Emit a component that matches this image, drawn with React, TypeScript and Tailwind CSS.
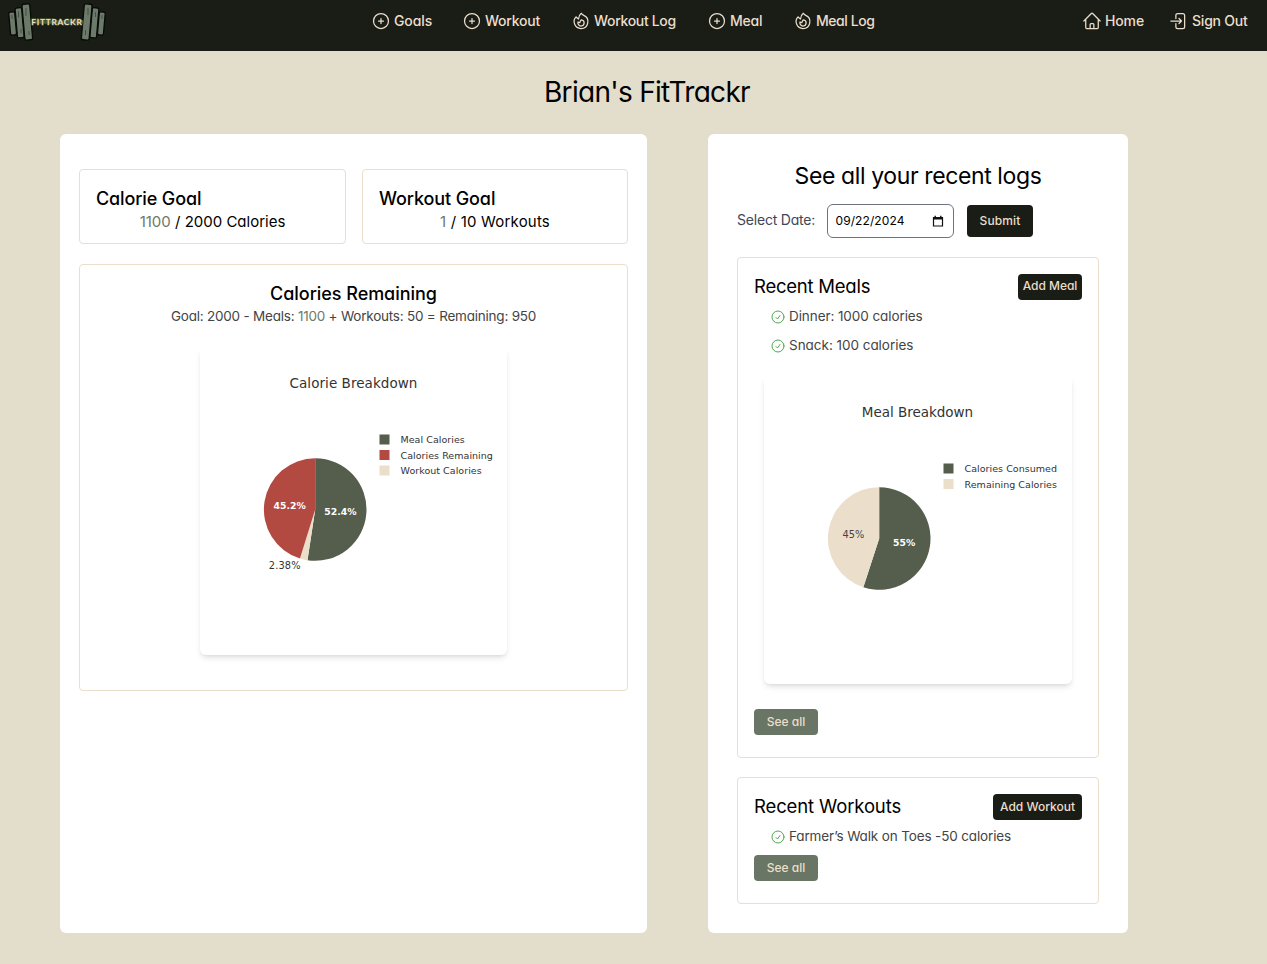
import React from 'react';
import { HiOutlineFire, HiOutlineHome } from 'react-icons/hi2';

function PlusCircle() {
  return (
    <svg viewBox="0 0 24 24" fill="none" stroke="currentColor" strokeWidth="1.5" strokeLinecap="round" className="size-[20px] shrink-0">
      <circle cx="12" cy="12" r="9" />
      <path d="M12 9v6M9 12h6" />
    </svg>
  );
}

function CheckCircle() {
  return (
    <svg viewBox="0 0 24 24" fill="none" stroke="#4fa852" strokeWidth="1.5" strokeLinecap="round" strokeLinejoin="round" className="size-[16px] shrink-0">
      <circle cx="12" cy="12" r="9" />
      <path d="M9 12.75 11.25 15 15 9.75" />
    </svg>
  );
}

function SignOut() {
  return (
    <svg viewBox="0 0 24 24" fill="none" stroke="currentColor" strokeWidth="1.5" strokeLinecap="round" strokeLinejoin="round" className="size-[20px] shrink-0">
      <path d="M8.25 9V5.25A2.25 2.25 0 0 1 10.5 3h6a2.25 2.25 0 0 1 2.25 2.25v13.5A2.25 2.25 0 0 1 16.5 21h-6a2.25 2.25 0 0 1-2.25-2.25V15M12 9l3 3m0 0-3 3m3-3H2.25" />
    </svg>
  );
}

function Fire() {
  return <HiOutlineFire className="size-[20px] shrink-0" />;
}

function Logo() {
  return (
    <svg viewBox="0 0 98 40" className="h-[40px] w-[98px] shrink-0">
      <g fill="#6c7a69" stroke="#080a07" strokeWidth="1.3">
        <rect x="1.6" y="10" width="6" height="23" rx="1.6" transform="rotate(-5 4.6 21)" />
        <rect x="8.3" y="5.8" width="6.6" height="30" rx="1.6" transform="rotate(-5 11.6 21)" />
        <rect x="15.4" y="2" width="7.8" height="36" rx="1.8" transform="rotate(-5 19.3 20)" />
        <rect x="90.4" y="10" width="6" height="23" rx="1.6" transform="rotate(5 93.4 21)" />
        <rect x="83.1" y="5.8" width="6.6" height="30" rx="1.6" transform="rotate(5 86.4 21)" />
        <rect x="74.8" y="2" width="7.8" height="36" rx="1.8" transform="rotate(5 78.7 20)" />
      </g>
      <g stroke="#080a07" strokeWidth="0.7" fill="none" opacity="0.55">
        <path d="M4 13v4M10.500 9.500v6M18 6v8M13 27v4M21 29v4M80 6v7M87.500 10v5M94 13v4M77.500 28v5" />
      </g>
      <path d="M24 20h51" stroke="#4d5937" strokeWidth="3.500" />
      <text x="23.3" y="22.800" fill="#ebdecb" stroke="#5f6d36" strokeWidth="0.8" paintOrder="stroke" className="font-['Lato'] text-[8.300px] font-bold tracking-[0.75px]">FITTRACKR</text>
    </svg>
  );
}

function arc(cx: number, cy: number, r: number, from: number, to: number) {
  const p = (t: number) => [cx + r * Math.sin(2 * Math.PI * t), cy - r * Math.cos(2 * Math.PI * t)];
  const [x0, y0] = p(from);
  const [x1, y1] = p(to);
  return `M${cx} ${cy}L${x0} ${y0}A${r} ${r} 0 ${to - from > 0.5 ? 1 : 0} 1 ${x1} ${y1}Z`;
}

type Slice = { from: number; to: number; color: string; label: string; x: number; y: number; labelClass: string };
type Legend = { color: string; text: string };

function PieChart({ title, titleClass, slices, legend }: { title: string; titleClass: string; slices: Slice[]; legend: Legend[] }) {
  return (
    <svg viewBox="0 0 308 308" className="block h-[308px] w-[308px] font-['DejaVu_Sans']">
      <text x="153.5" y="41" textAnchor="middle" className={titleClass}>{title}</text>
      {slices.map((s) => (
        <path key={s.label} d={arc(115.2, 162.5, 51.3, s.from, s.to)} fill={s.color} />
      ))}
      {slices.map((s) => (
        <text key={s.label} x={s.x} y={s.y} textAnchor="middle" className={s.labelClass}>{s.label}</text>
      ))}
      {legend.map((l, i) => (
        <g key={l.text}>
          <rect x="179.5" y={87.5 + i * 15.5} width="10" height="10" fill={l.color} />
          <text x="200.5" y={96 + i * 15.5} className="fill-[#333] text-[9.5px] tracking-[0.04px]">{l.text}</text>
        </g>
      ))}
    </svg>
  );
}

const GREEN = '#555d4d';
const RED = '#b34a41';
const CREAM = '#ebdecb';

function NavItem({ icon, label, labelClass }: { icon: React.ReactNode; label: string; labelClass: string }) {
  return (
    <a className="flex items-center gap-[3px]">
      {icon}
      <span className={labelClass}>{label}</span>
    </a>
  );
}

function Item({ children, textClass }: { children: React.ReactNode; textClass: string }) {
  return (
    <li className="flex h-[29px] items-center gap-[3px] pl-[16px]">
      <CheckCircle />
      <span className={textClass}>{children}</span>
    </li>
  );
}

function SeeAll() {
  return (
    <button className="flex h-[26px] w-[64px] items-center justify-center rounded bg-[#6a7665] pb-px text-[12px] font-medium text-[#ebdecb]">See all</button>
  );
}

export default function App() {
  return (
    <div className="h-[964px] w-[1267px] overflow-hidden bg-[#e3decc] font-['Inter',sans-serif] whitespace-nowrap text-black [font-feature-settings:'cv11']">
      <nav className="flex h-[51px] items-start bg-[#1a1c16] text-[14px] leading-[21px] font-medium text-[#ebdecb]">
        <div className="w-[371px] pt-[2px] pl-[8px]"><Logo /></div>
        <div className="flex flex-1 pt-[10px]">
          <NavItem icon={<PlusCircle />} label="Goals" labelClass="w-[68px] tracking-[-0.1px]" />
          <NavItem icon={<PlusCircle />} label="Workout" labelClass="w-[86px] tracking-[-0.22px]" />
          <NavItem icon={<Fire />} label="Workout Log" labelClass="w-[113px] tracking-[-0.32px]" />
          <NavItem icon={<PlusCircle />} label="Meal" labelClass="w-[63px] tracking-[-0.25px]" />
          <NavItem icon={<Fire />} label="Meal Log" labelClass="tracking-[-0.45px]" />
        </div>
        <div className="flex w-[185px] pt-[10px]">
          <NavItem icon={<HiOutlineHome className="size-[20px] shrink-0" />} label="Home" labelClass="w-[64px] tracking-[-0.13px]" />
          <NavItem icon={<SignOut />} label="Sign Out" labelClass="tracking-[-0.22px]" />
        </div>
      </nav>

      <h1 className="flex h-[83px] items-center pb-[2px] pl-[544px] text-[28px] tracking-[-0.71px]">Brian's FitTrackr</h1>

      <main className="flex gap-[61px] pl-[60px]">
        <section className="h-[799px] w-[587px] rounded-md bg-white px-[19px] pt-[35px]">
          <div className="flex gap-[16px]">
            <div className="h-[75px] w-[267px] rounded border border-[#ebdecb] px-[16px] pt-[17px]">
              <h2 className="text-[18px] leading-[23px] font-medium tracking-[-0.12px]">Calorie Goal</h2>
              <p className="text-center text-[15px] leading-[24px]"><span className="text-[#6c7a69]">1100</span> / 2000 Calories</p>
            </div>
            <div className="h-[75px] w-[266px] rounded border border-[#ebdecb] px-[16px] pt-[17px]">
              <h2 className="text-[18px] leading-[23px] font-medium tracking-[-0.1px]">Workout Goal</h2>
              <p className="text-center text-[15px] leading-[24px] tracking-[0.19px]"><span className="text-[#6c7a69]">1</span> / 10 Workouts</p>
            </div>
          </div>
          <div className="mt-[20px] flex h-[427px] flex-col items-center rounded border border-[#ebdecb] pt-[17px]">
            <h2 className="text-[18px] leading-[23px] font-medium tracking-[-0.04px]">Calories Remaining</h2>
            <p className="text-[13.5px] leading-[23px] tracking-[-0.22px] text-[#444]">Goal: 2000 - Meals: <span className="text-[#6c7a69]">1100</span> + Workouts: 50 = Remaining: 950</p>
            <div className="mt-[19px] -ml-px w-[307px] overflow-visible rounded-md bg-white shadow-md">
              <PieChart
                title="Calorie Breakdown"
                titleClass="fill-[#333] text-[13.5px] tracking-[0.06px]"
                slices={[
                  { from: 0, to: 0.524, color: GREEN, label: '52.4%', x: 140.5, y: 168, labelClass: 'fill-white text-[9.3px] font-bold' },
                  { from: 0.524, to: 0.548, color: CREAM, label: '2.38%', x: 84.7, y: 222, labelClass: 'fill-[#333] text-[9.8px] tracking-[0.15px]' },
                  { from: 0.548, to: 1, color: RED, label: '45.2%', x: 89.7, y: 162, labelClass: 'fill-white text-[9.3px] font-bold' },
                ]}
                legend={[
                  { color: GREEN, text: 'Meal Calories' },
                  { color: RED, text: 'Calories Remaining' },
                  { color: CREAM, text: 'Workout Calories' },
                ]}
              />
            </div>
          </div>
        </section>

        <section className="h-[799px] w-[420px] rounded-md bg-white px-[29px] pt-[27px]">
          <h2 className="text-center text-[23px] leading-[30px] tracking-[-0.39px]">See all your recent logs</h2>
          <div className="mt-[13px] flex h-[34px] items-center">
            <label className="w-[90px] pb-[3px] text-[14px] tracking-[-0.2px] text-[#404858]">Select Date:</label>
            <div className="flex h-[34px] w-[127px] items-center justify-between rounded-md border border-[#6b7280] pr-[9px] pl-[7.5px] text-[12px] tracking-[0.09px]">
              <span>09/22/2024</span>
              <svg viewBox="0 0 12 13" className="h-[13px] w-[12px]">
                <path d="M1.5 2.5h9v8.5h-9z" fill="none" stroke="#111" strokeWidth="1.2" />
                <path d="M1 2h10v2.5H1zM2.5 .8h1.4V2H2.5zM8.1 .8h1.4V2H8.1z" fill="#111" />
              </svg>
            </div>
            <button className="ml-[13px] flex h-[32px] w-[66px] items-center justify-center rounded bg-[#1a1c16] text-[12px] font-medium tracking-[0.14px] text-[#ebdecb]">Submit</button>
          </div>

          <div className="mt-[19px] h-[501px] w-[362px] rounded border border-[#ebdecb] px-[16px] pt-[16px]">
            <div className="flex h-[28px] items-start justify-between">
              <h3 className="text-[18.5px] leading-[24px] tracking-[-0.24px]">Recent Meals</h3>
              <button className="flex h-[26px] w-[64px] items-center justify-center rounded bg-[#1a1c16] pb-[2px] text-[12px] font-medium tracking-[-0.05px] text-[#ebdecb]">Add Meal</button>
            </div>
            <ul className="text-[13.5px] text-[#444]">
              <Item textClass="tracking-[-0.08px]">Dinner: 1000 calories</Item>
              <Item textClass="tracking-[-0.03px]">Snack: 100 calories</Item>
            </ul>
            <div className="mx-auto mt-[16px] mb-[25px] w-[308px] rounded-md bg-white shadow-md">
              <PieChart
                title="Meal Breakdown"
                titleClass="fill-[#333] text-[13.5px] tracking-[-0.02px]"
                slices={[
                  { from: 0, to: 0.55, color: GREEN, label: '55%', x: 140.2, y: 170, labelClass: 'fill-white text-[9.3px] font-bold' },
                  { from: 0.55, to: 1, color: CREAM, label: '45%', x: 89.5, y: 162, labelClass: 'fill-[#444] text-[9.8px] tracking-[0.1px]' },
                ]}
                legend={[
                  { color: GREEN, text: 'Calories Consumed' },
                  { color: CREAM, text: 'Remaining Calories' },
                ]}
              />
            </div>
            <SeeAll />
          </div>

          <div className="mt-[19px] h-[127px] w-[362px] rounded border border-[#ebdecb] px-[16px] pt-[16px]">
            <div className="flex h-[28px] items-start justify-between">
              <h3 className="text-[18.5px] leading-[24px] tracking-[-0.13px]">Recent Workouts</h3>
              <button className="flex h-[26px] w-[89px] items-center justify-center rounded bg-[#1a1c16] text-[12px] font-medium text-[#ebdecb]">Add Workout</button>
            </div>
            <ul className="mb-[4px] text-[13.5px] text-[#444]">
              <Item textClass="tracking-[-0.14px]">Farmer’s Walk on Toes -50 calories</Item>
            </ul>
            <SeeAll />
          </div>
        </section>
      </main>
    </div>
  );
}
